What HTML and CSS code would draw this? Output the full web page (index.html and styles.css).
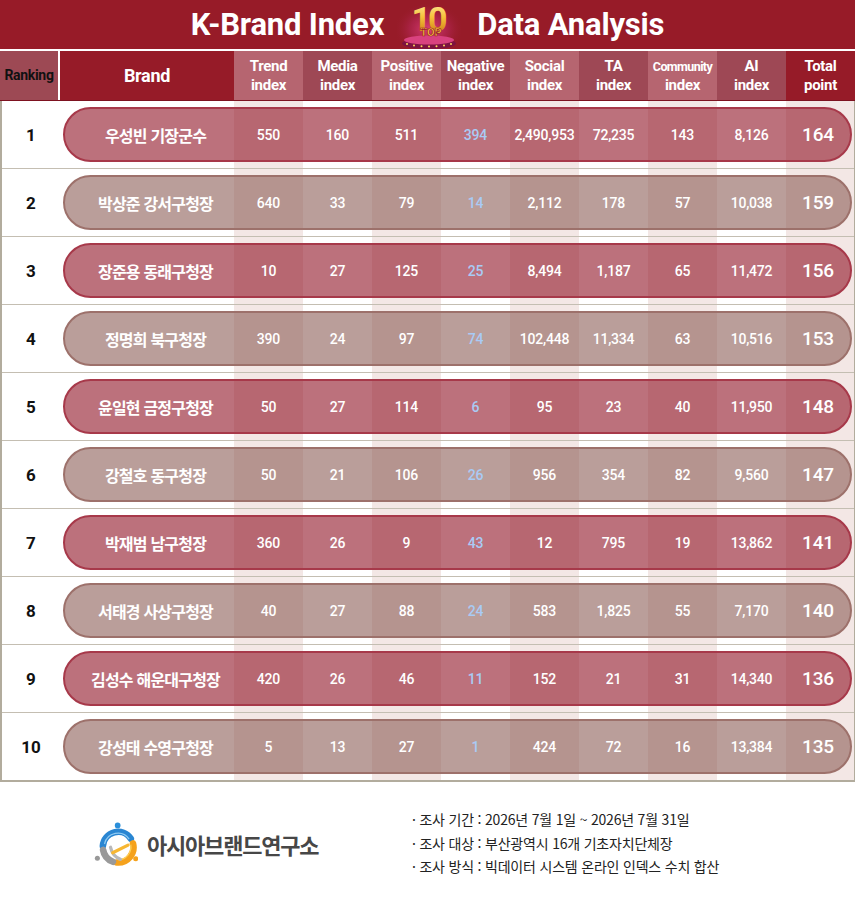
FILE: index.html
```html
<!DOCTYPE html>
<html lang="ko">
<head>
<meta charset="utf-8">
<title>K-Brand Index Data Analysis</title>
<link rel="stylesheet" href="styles.css">
</head>
<body>
<header class="title">
  <span class="title-text">K-Brand Index</span>
  <svg class="top10" viewBox="0 0 64 49" aria-hidden="true">
    <defs>
      <radialGradient id="glow" cx="50%" cy="60%" r="55%">
        <stop offset="0" stop-color="#e2437e" stop-opacity=".95"/>
        <stop offset=".55" stop-color="#b8285a" stop-opacity=".55"/>
        <stop offset="1" stop-color="#971b28" stop-opacity="0"/>
      </radialGradient>
      <linearGradient id="gold" x1="0" y1="0" x2="0" y2="1">
        <stop offset="0" stop-color="#fff3ad"/>
        <stop offset=".45" stop-color="#f6c23a"/>
        <stop offset="1" stop-color="#c26808"/>
      </linearGradient>
    </defs>
    <rect width="64" height="49" fill="url(#glow)"/>
    <ellipse cx="32" cy="43.5" rx="27" ry="5.5" fill="#7d1340"/>
    <ellipse cx="32" cy="40" rx="25" ry="4.5" fill="#d9427f"/>
    <g fill="#ffd75a">
      <circle cx="10" cy="44" r="1"/><circle cx="17" cy="45.5" r="1"/><circle cx="24.5" cy="46.3" r="1"/>
      <circle cx="32" cy="46.5" r="1"/><circle cx="39.5" cy="46.3" r="1"/><circle cx="47" cy="45.5" r="1"/><circle cx="54" cy="44" r="1"/>
    </g>
    <text text-anchor="middle" fill="url(#gold)"><tspan class="svg-ten" x="31" y="31">10</tspan><tspan class="svg-top" x="34" y="35.5" stroke="#9a1a2a" stroke-width=".7" fill="#f8c83c">TOP</tspan></text>
  </svg>
  <span class="title-text">Data Analysis</span>
</header>

<section class="table">
  <div class="thead">
    <div class="th rank">Ranking</div>
    <div class="th brand">Brand</div>
    <div class="th light">Trend<br>index</div>
    <div class="th dark">Media<br>index</div>
    <div class="th light">Positive<br>index</div>
    <div class="th dark">Negative<br>index</div>
    <div class="th light">Social<br>index</div>
    <div class="th dark">TA<br>index</div>
    <div class="th light"><span><span class="small">Community</span><br>index</span></div>
    <div class="th dark">AI<br>index</div>
    <div class="th total">Total<br>point</div>
  </div>

  <div class="tbody">
    <div class="row">
      <div class="rank">1</div>
      <div class="pill odd">
        <div class="name">우성빈 기장군수</div>
        <div class="v">550</div><div class="v">160</div><div class="v">511</div><div class="v neg">394</div>
        <div class="v">2,490,953</div><div class="v">72,235</div><div class="v">143</div><div class="v">8,126</div>
        <div class="v tot">164</div>
      </div>
    </div>
    <div class="row">
      <div class="rank">2</div>
      <div class="pill even">
        <div class="name">박상준 강서구청장</div>
        <div class="v">640</div><div class="v">33</div><div class="v">79</div><div class="v neg">14</div>
        <div class="v">2,112</div><div class="v">178</div><div class="v">57</div><div class="v">10,038</div>
        <div class="v tot">159</div>
      </div>
    </div>
    <div class="row">
      <div class="rank">3</div>
      <div class="pill odd">
        <div class="name">장준용 동래구청장</div>
        <div class="v">10</div><div class="v">27</div><div class="v">125</div><div class="v neg">25</div>
        <div class="v">8,494</div><div class="v">1,187</div><div class="v">65</div><div class="v">11,472</div>
        <div class="v tot">156</div>
      </div>
    </div>
    <div class="row">
      <div class="rank">4</div>
      <div class="pill even">
        <div class="name">정명희 북구청장</div>
        <div class="v">390</div><div class="v">24</div><div class="v">97</div><div class="v neg">74</div>
        <div class="v">102,448</div><div class="v">11,334</div><div class="v">63</div><div class="v">10,516</div>
        <div class="v tot">153</div>
      </div>
    </div>
    <div class="row">
      <div class="rank">5</div>
      <div class="pill odd">
        <div class="name">윤일현 금정구청장</div>
        <div class="v">50</div><div class="v">27</div><div class="v">114</div><div class="v neg">6</div>
        <div class="v">95</div><div class="v">23</div><div class="v">40</div><div class="v">11,950</div>
        <div class="v tot">148</div>
      </div>
    </div>
    <div class="row">
      <div class="rank">6</div>
      <div class="pill even">
        <div class="name">강철호 동구청장</div>
        <div class="v">50</div><div class="v">21</div><div class="v">106</div><div class="v neg">26</div>
        <div class="v">956</div><div class="v">354</div><div class="v">82</div><div class="v">9,560</div>
        <div class="v tot">147</div>
      </div>
    </div>
    <div class="row">
      <div class="rank">7</div>
      <div class="pill odd">
        <div class="name">박재범 남구청장</div>
        <div class="v">360</div><div class="v">26</div><div class="v">9</div><div class="v neg">43</div>
        <div class="v">12</div><div class="v">795</div><div class="v">19</div><div class="v">13,862</div>
        <div class="v tot">141</div>
      </div>
    </div>
    <div class="row">
      <div class="rank">8</div>
      <div class="pill even">
        <div class="name">서태경 사상구청장</div>
        <div class="v">40</div><div class="v">27</div><div class="v">88</div><div class="v neg">24</div>
        <div class="v">583</div><div class="v">1,825</div><div class="v">55</div><div class="v">7,170</div>
        <div class="v tot">140</div>
      </div>
    </div>
    <div class="row">
      <div class="rank">9</div>
      <div class="pill odd">
        <div class="name">김성수 해운대구청장</div>
        <div class="v">420</div><div class="v">26</div><div class="v">46</div><div class="v neg">11</div>
        <div class="v">152</div><div class="v">21</div><div class="v">31</div><div class="v">14,340</div>
        <div class="v tot">136</div>
      </div>
    </div>
    <div class="row">
      <div class="rank">10</div>
      <div class="pill even">
        <div class="name">강성태 수영구청장</div>
        <div class="v">5</div><div class="v">13</div><div class="v">27</div><div class="v neg">1</div>
        <div class="v">424</div><div class="v">72</div><div class="v">16</div><div class="v">13,384</div>
        <div class="v tot">135</div>
      </div>
    </div>
  </div>
</section>

<footer class="footer">
  <div class="logo">
    <svg class="logo-mark" viewBox="-2 0 40 42" aria-hidden="true">
      <circle cx="19.5" cy="4" r="2.6" fill="#2b8fda"/>
      <path d="M6,22.8 A14,14 0 0 1 31.5,16" fill="none" stroke="#2a86d2" stroke-width="6" stroke-linecap="round"/>
      <path d="M7.5,21 A12.5,12.5 0 0 1 30,16.5" fill="none" stroke="#8fcaf2" stroke-width="1.1"/>
      <path d="M33.5,20.4 A14,14 0 0 1 18.8,37.9" fill="none" stroke="#f5a21c" stroke-width="6" stroke-linecap="round"/>
      <path d="M31.5,21.5 A12,12 0 0 1 20,35.5" fill="none" stroke="#fcd05a" stroke-width="1.1"/>
      <path d="M15.2,37.2 A14,14 0 0 1 6.2,26.4" fill="none" stroke="#999999" stroke-width="6" stroke-linecap="round"/>
      <path d="M13,24 C14,29 17,33 22,35" fill="none" stroke="#b9b9b9" stroke-width="3" stroke-linecap="round"/>
      <path d="M15,29 L29,22" fill="none" stroke="#f7b733" stroke-width="3" stroke-linecap="round"/>
      <circle cx="1" cy="34" r="2.3" fill="#999999"/>
      <circle cx="36" cy="34.5" r="2.3" fill="#f5a21c"/>
    </svg>
    <span class="logo-text">아시아브랜드연구소</span>
  </div>
  <ul class="notes">
    <li>· 조사 기간 : 2026년 7월 1일 ~ 2026년 7월 31일</li>
    <li>· 조사 대상 : 부산광역시 16개 기초자치단체장</li>
    <li>· 조사 방식 : 빅데이터 시스템 온라인 인덱스 수치 합산</li>
  </ul>
</footer>
</body>
</html>
```

FILE: styles.css
```css
html, body {
  margin: 0;
  padding: 0;
  background: #ffffff;
}

body {
  width: 855px;
  font-family: Roboto, "Noto Sans CJK KR", sans-serif;
}

/* ---------- title bar ---------- */
.title {
  height: 49px;
  margin-bottom: 2px;
  background: #971b28;
  display: flex;
  align-items: center;
  justify-content: center;
  color: #ffffff;
  font-size: 31px;
  font-weight: 700;
}

.title-text {
  letter-spacing: -0.2px;
  line-height: 49px;
}

.top10 {
  display: block;
  flex-shrink: 0;
  width: 64px;
  height: 49px;
  margin: 0 16px 0 13px;
  overflow: visible;
}

.svg-ten {
  font-family: Roboto, sans-serif;
  font-weight: 700;
  font-size: 34px;
  letter-spacing: -3px;
}

.svg-top {
  font-family: Roboto, sans-serif;
  font-weight: 900;
  font-size: 11px;
  letter-spacing: 0;
}

/* ---------- table header ---------- */
.thead {
  display: grid;
  grid-template-columns: 60px 174px repeat(9, 69px);
  height: 49px;
  border-bottom: 1px solid #7d1220;
  color: #ffffff;
  font-weight: 700;
}

.th {
  display: flex;
  align-items: center;
  justify-content: center;
  text-align: center;
  font-size: 15px;
  line-height: 19px;
  letter-spacing: -0.3px;
}

.th.rank {
  background: #9d4954;
  font-size: 14px;
}

.th.brand {
  background: #961b28;
  font-size: 18px;
}

.th.light {
  background: #b66570;
}

.th.dark {
  background: #9e4855;
}

.th.total {
  background: #961b28;
}

.th .small {
  font-size: 12.5px;
  letter-spacing: -0.6px;
}

/* ---------- table body ---------- */
.tbody {
  border-left: 2px solid #b2ac9d;
  border-right: 1px solid #b2ac9d;
  border-bottom: 2px solid #b2ac9d;
  background-origin: border-box;
  background-image: linear-gradient(to right,
    #ffffff 0 234px,
    #f3e7e5 234px 303px,
    #ffffff 303px 372px,
    #f3e7e5 372px 441px,
    #ffffff 441px 510px,
    #f3e7e5 510px 579px,
    #ffffff 579px 648px,
    #f3e7e5 648px 717px,
    #ffffff 717px 786px,
    #f3e7e5 786px 855px);
}

.row {
  display: flex;
  align-items: center;
  height: 67px;
}

.row:not(:last-child) {
  border-bottom: 1px solid #c4beb2;
}

.rank {
  width: 58px;
  flex-shrink: 0;
  text-align: center;
  font-size: 17px;
  font-weight: 700;
  color: #111111;
}

.pill {
  margin-left: 3px;
  width: 789px;
  flex-shrink: 0;
  height: 55px;
  box-sizing: border-box;
  border: 2px solid;
  border-radius: 28px;
  display: grid;
  grid-template-columns: 169px repeat(8, 69px) 1fr;
  align-items: center;
  color: #ffffff;
}

.pill.odd {
  background: rgba(140, 10, 30, 0.58);
  border-color: #a7394a;
}

.pill.even {
  background: rgba(136, 88, 81, 0.58);
  border-color: #9d716b;
}

.name {
  padding-left: 12px;
  text-align: center;
  font-family: "Noto Sans CJK KR", sans-serif;
  font-weight: 700;
  font-size: 16px;
  letter-spacing: -0.8px;
  white-space: nowrap;
}

.v {
  text-align: center;
  font-size: 14px;
  font-weight: 500;
  letter-spacing: -0.2px;
  white-space: nowrap;
}

.v.neg {
  color: #a9cbf5;
}

.v.tot {
  font-size: 19px;
  font-weight: 500;
}

/* ---------- footer ---------- */
.footer {
  height: 115px;
  padding: 4px 0 0 94px;
  display: flex;
  align-items: center;
}

.logo {
  width: 318px;
  flex-shrink: 0;
  display: flex;
  align-items: center;
}

.logo-mark {
  display: block;
  flex-shrink: 0;
  width: 44px;
  height: 46px;
}

.logo-text {
  margin-left: 9px;
  font-family: "Noto Sans CJK KR", sans-serif;
  font-size: 22px;
  font-weight: 700;
  letter-spacing: -1.2px;
  color: #474747;
  white-space: nowrap;
}

.notes {
  list-style: none;
  margin: 0;
  padding: 0;
  font-family: "Noto Sans CJK KR", sans-serif;
  font-size: 14px;
  line-height: 23.5px;
  color: #222222;
  letter-spacing: -0.2px;
}
```
